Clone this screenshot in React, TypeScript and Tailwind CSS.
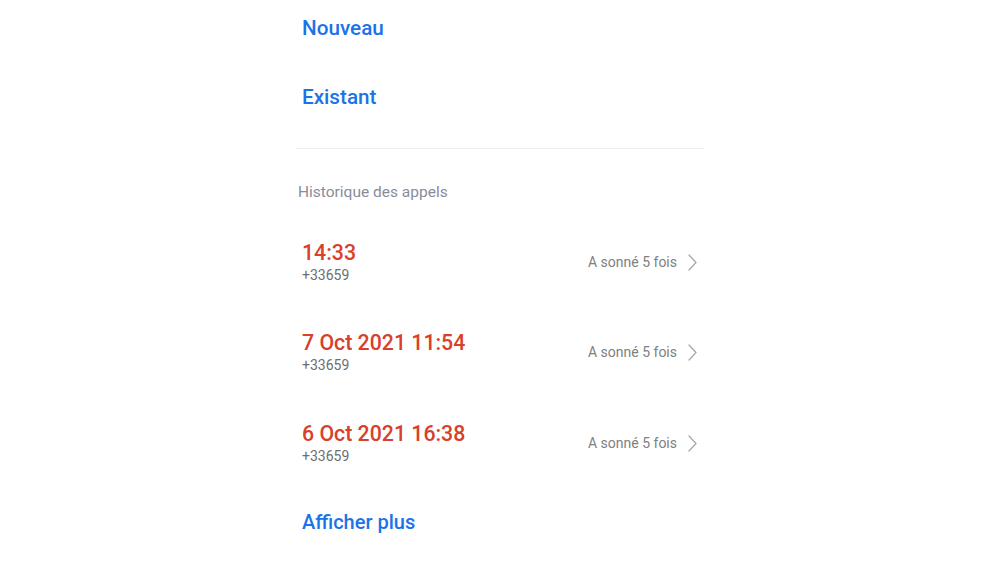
import React from "react";

const rows = [
  { t: "14:33", n: "+33659" },
  { t: "7 Oct 2021 11:54", n: "+33659" },
  { t: "6 Oct 2021 16:38", n: "+33659" },
];

function Chevron() {
  return (
    <svg width="9" height="17" viewBox="0 0 9 17" fill="none">
      <polyline points="1,1 8,8.5 1,16" stroke="#a8a8a8" strokeWidth="1.3" strokeLinecap="round" strokeLinejoin="round" />
    </svg>
  );
}

export default function App() {
  return (
    <div className="w-[1000px] h-[563px] bg-white overflow-hidden" style={{ fontFamily: "Roboto, 'Liberation Sans', sans-serif" }}>
      <div className="mx-auto w-[408px] flex flex-col">
        <div className="h-[58px] flex items-center pl-[6px] text-[20.7px] font-medium text-[#1a73e8]">Nouveau</div>
        <div className="h-[80px] flex items-center pl-[6px] text-[20.7px] font-medium text-[#1a73e8]">Existant</div>
        <div className="mt-[10px] h-px bg-[#eeeeee]" />
        <div className="pt-[33px] pl-[2px] text-[15.5px] leading-[20px] text-[#8a8c99]">Historique des appels</div>
        <div className="mt-[15px] flex flex-col">
          {rows.map((r, i) => (
            <div key={i} className="h-[90.5px] flex items-center justify-between pl-[6px] pr-[7px]">
              <div className="flex flex-col">
                <span className="text-[21.3px] leading-[25px] font-medium text-[#d9402b]">{r.t}</span>
                <span className="text-[14px] leading-[20px] text-[#6e6e6e]">{r.n}</span>
              </div>
              <div className="flex items-center gap-[11px]">
                <span className="text-[14px] text-[#808080]">A sonné 5 fois</span>
                <Chevron />
              </div>
            </div>
          ))}
        </div>
        <div className="mt-[21px] pl-[6px] text-[20px] leading-[25px] font-medium text-[#1a73e8]">Afficher plus</div>
      </div>
    </div>
  );
}
